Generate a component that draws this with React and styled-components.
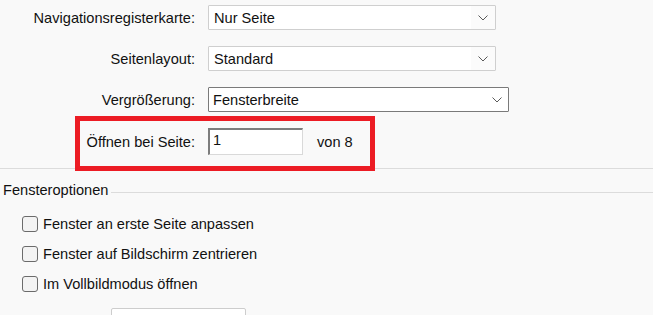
import styled, { createGlobalStyle } from 'styled-components';

const GlobalStyle = createGlobalStyle`
  html, body {
    margin: 0;
    padding: 0;
    background: #f9f9f9;
    font-family: "Liberation Sans", Arial, sans-serif;
    font-size: 14.6px;
    color: #111;
    overflow: hidden;
  }
`;

const Page = styled.div`
  position: relative;
  width: 653px;
  height: 315px;
  overflow: hidden;
`;

const Form = styled.div`
  display: grid;
  grid-template-columns: 195px auto;
  column-gap: 13px;
  row-gap: 16px;
  padding-top: 5px;
  align-items: center;
  justify-items: start;
`;

const Label = styled.label`
  justify-self: end;
  white-space: nowrap;
`;

const Select = styled.div`
  position: relative;
  box-sizing: border-box;
  width: ${(p) => p.$width}px;
  height: 25px;
  display: flex;
  align-items: center;
  padding-left: ${(p) => (p.$active ? 4 : 5)}px;
  background: #fff;
  border: 1px solid ${(p) => (p.$active ? '#7a7a7a' : '#cfcfcf')};
  border-radius: 1px;
`;

const Chevron = styled.span`
  position: absolute;
  right: 0;
  top: 0;
  bottom: 0;
  width: 24px;
  display: flex;
  align-items: center;
  justify-content: center;
  background: ${(p) => (p.$active ? '#fff' : '#fbfbfb')};
  svg {
    margin-left: ${(p) => (p.$active ? 2 : 0)}px;
  }
`;

const PageRow = styled.div`
  display: flex;
  align-items: center;
  gap: 14px;
`;

const NumberInput = styled.div`
  box-sizing: border-box;
  width: 95px;
  height: 27px;
  padding: 2px 0 0 3px;
  background: #fff;
  border-style: solid;
  border-width: 2px 1px 1px 2px;
  border-color: #7d7d7d #d9d9d9 #d9d9d9 #7d7d7d;
  display: flex;
  align-items: flex-start;
`;

const Divider = styled.div`
  margin-top: 13px;
  height: 1px;
  background: #dcdcdc;
`;

const Highlight = styled.div`
  position: absolute;
  left: 75px;
  top: 116px;
  width: 300px;
  height: 55px;
  box-sizing: border-box;
  border: 5px solid #ec1c24;
  pointer-events: none;
`;

const GroupHead = styled.div`
  display: flex;
  align-items: center;
  gap: 3px;
  margin-top: 13px;
  padding-left: 3px;
  line-height: 17px;
`;

const GroupLine = styled.div`
  flex: 1;
  height: 1px;
  margin-top: 3px;
  background: #dcdcdc;
`;

const Options = styled.div`
  display: flex;
  flex-direction: column;
  gap: 14px;
  padding: 17px 0 0 22px;
`;

const Option = styled.label`
  display: flex;
  align-items: center;
  gap: 5px;
  height: 16px;
`;

const Box = styled.span`
  box-sizing: border-box;
  width: 16px;
  height: 16px;
  border: 1px solid #6b6b6b;
  border-radius: 3px;
  background: #f3f3f3;
`;

const Bottom = styled.div`
  margin: 16px 0 0 111px;
  width: 135px;
  height: 20px;
  box-sizing: border-box;
  background: #fff;
  border: 1px solid #cdcdcd;
  border-radius: 2px;
`;

const ChevronIcon = () => (
  <svg width="10" height="6" viewBox="0 0 10 6">
    <path d="M0.5 0.5 L5 5 L9.5 0.5" fill="none" stroke="#5a5a5a" strokeWidth="1" />
  </svg>
);

const Dropdown = ({ value, width, active }) => (
  <Select $width={width} $active={active}>
    {value}
    <Chevron $active={active}>
      <ChevronIcon />
    </Chevron>
  </Select>
);

const options = [
  'Fenster an erste Seite anpassen',
  'Fenster auf Bildschirm zentrieren',
  'Im Vollbildmodus öffnen',
];

export default function App() {
  return (
    <Page>
      <GlobalStyle />
      <Form>
        <Label>Navigationsregisterkarte:</Label>
        <Dropdown value="Nur Seite" width={288} />
        <Label>Seitenlayout:</Label>
        <Dropdown value="Standard" width={288} />
        <Label>Vergrößerung:</Label>
        <Dropdown value="Fensterbreite" width={301} active />
        <Label>Öffnen bei Seite:</Label>
        <PageRow>
          <NumberInput>1</NumberInput>
          <span>von 8</span>
        </PageRow>
      </Form>
      <Divider />
      <GroupHead>
        <span>Fensteroptionen</span>
        <GroupLine />
      </GroupHead>
      <Options>
        {options.map((o) => (
          <Option key={o}>
            <Box />
            {o}
          </Option>
        ))}
      </Options>
      <Bottom />
      <Highlight />
    </Page>
  );
}
